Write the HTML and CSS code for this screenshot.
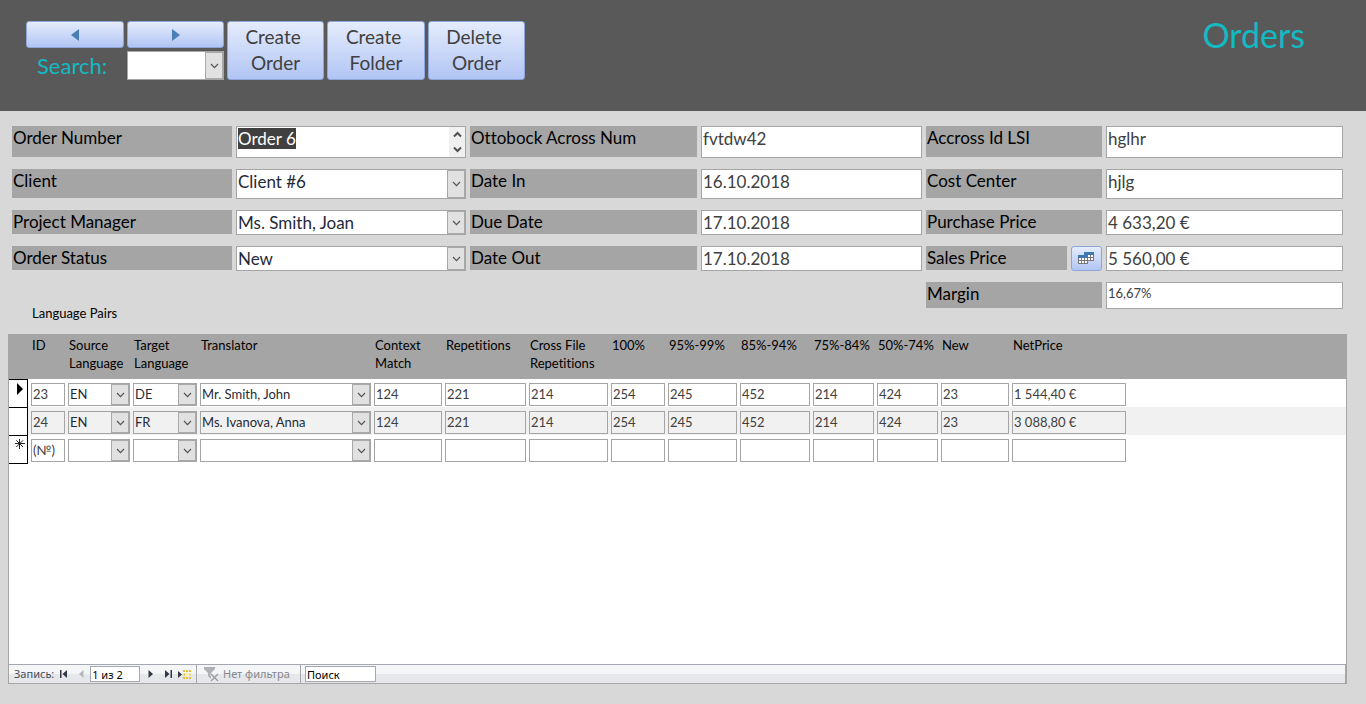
FILE: index.html
```html
<!DOCTYPE html>
<html lang="en">
<head>
<meta charset="utf-8">
<meta name="viewport" content="width=device-width, initial-scale=1">
<title>Orders</title>
<link rel="stylesheet" href="styles.css">
</head>
<body>
<svg class="defs" aria-hidden="true">
  <symbol id="chevron" viewBox="0 0 9 6"><path d="M1 1l3.500 3.600L8 1" fill="none" stroke="#555" stroke-width="1.200"/></symbol>
</svg>

<header class="topbar">
  <div class="toolbar">
    <button class="btn nav-prev" type="button" aria-label="Previous order"><svg width="8" height="12" viewBox="0 0 8 12"><path d="M8 0v12L0 6z" fill="#4a7fb5"/></svg></button>
    <button class="btn nav-next" type="button" aria-label="Next order"><svg width="8" height="12" viewBox="0 0 8 12"><path d="M0 0v12l8-6z" fill="#4a7fb5"/></svg></button>
    <label class="search-label" for="search">Search:</label>
    <div class="combo search-combo"><select id="search"><option></option></select><span class="arrow"><svg><use href="#chevron"/></svg></span></div>
    <button class="btn btn-big" type="button">Create 
Order</button>
    <button class="btn btn-big" type="button">Create 
Folder</button>
    <button class="btn btn-big" type="button">Delete 
Order</button>
  </div>
  <h1>Orders</h1>
</header>

<main>
<form class="form" onsubmit="return false">
  <label class="name" for="order-number">Order Number</label>
  <div class="spin-field tall"><input id="order-number" value="Order 6">
    <div class="spinner">
      <button type="button" aria-label="Scroll up"><svg width="9" height="7" viewBox="0 0 9 7"><path d="M1 5.500L4.500 2 8 5.500" fill="none" stroke="#505050" stroke-width="2"/></svg></button>
      <button type="button" aria-label="Scroll down"><svg width="9" height="7" viewBox="0 0 9 7"><path d="M1 1.500L4.500 5 8 1.500" fill="none" stroke="#505050" stroke-width="2"/></svg></button>
    </div>
  </div>
  <label class="name" for="across-num">Ottobock Across Num</label>
  <input class="field tall" id="across-num" value="fvtdw42">
  <label class="name" for="across-id">Accross Id LSI</label>
  <input class="field tall" id="across-id" value="hglhr">

  <label class="name" for="client">Client</label>
  <div class="combo medium"><select id="client"><option>Client #6</option></select><span class="arrow"><svg><use href="#chevron"/></svg></span></div>
  <label class="name" for="date-in">Date In</label>
  <input class="field medium" id="date-in" value="16.10.2018">
  <label class="name" for="cost-center">Cost Center</label>
  <input class="field medium" id="cost-center" value="hjlg">

  <label class="name" for="manager">Project Manager</label>
  <div class="combo"><select id="manager"><option>Ms. Smith, Joan</option></select><span class="arrow"><svg><use href="#chevron"/></svg></span></div>
  <label class="name" for="due-date">Due Date</label>
  <input class="field" id="due-date" value="17.10.2018">
  <label class="name" for="purchase">Purchase Price</label>
  <input class="field" id="purchase" value="4 633,20 €">

  <label class="name" for="status">Order Status</label>
  <div class="combo"><select id="status"><option>New</option></select><span class="arrow"><svg><use href="#chevron"/></svg></span></div>
  <label class="name" for="date-out">Date Out</label>
  <input class="field" id="date-out" value="17.10.2018">
  <div class="name-with-button">
    <label class="name" for="sales">Sales Price</label>
    <button class="btn" type="button" aria-label="Open price tables"><svg width="17" height="13" viewBox="0 0 17 13" shape-rendering="crispEdges"><path d="M6 0h10v9H6z" fill="#fff"/><path d="M6 0h10v3H6z" fill="#3e78b2"/><path d="M6.500 3v5.500h9V3M12.500 3v5.500M9.500 3v5.500M6.500 5.500h9" fill="none" stroke="#777"/><path d="M0 3h10v9H0z" fill="#fff"/><path d="M0 3h10v3H0z" fill="#3e78b2"/><path d="M.5 6v5.500h9V6M3.500 6v5.500M6.500 6v5.500M.5 8.500h9" fill="none" stroke="#777"/></svg></button>
  </div>
  <input class="field" id="sales" value="5 560,00 €">

  <h2>Language Pairs</h2>
  <label class="name margin-name" for="margin">Margin</label>
  <input class="field margin-field" id="margin" value="16,67%">
</form>

<section class="subform">
  <table>
    <colgroup>
      <col class="c-sel"><col class="c-id"><col class="c-src"><col class="c-tgt"><col class="c-tr"><col class="c-ctx"><col class="c-rep"><col class="c-cross"><col class="c-100"><col class="c-95"><col class="c-85"><col class="c-75"><col class="c-50"><col class="c-new"><col>
    </colgroup>
    <thead>
      <tr><td></td><th>ID</th><th>Source<br>Language</th><th>Target<br>Language</th><th>Translator</th><th>Context<br>Match</th><th>Repetitions</th><th>Cross File<br>Repetitions</th><th>100%</th><th>95%-99%</th><th>85%-94%</th><th>75%-84%</th><th>50%-74%</th><th>New</th><th>NetPrice</th></tr>
    </thead>
    <tbody>
      <tr>
        <td class="sel"><div class="mark"><svg width="6" height="12" viewBox="0 0 6 12"><path d="M0 0v12l6-6z"/></svg></div></td>
        <td><input aria-label="ID" value="23"></td>
        <td><div class="combo"><select aria-label="Source Language"><option>EN</option></select><span class="arrow"><svg><use href="#chevron"/></svg></span></div></td>
        <td><div class="combo"><select aria-label="Target Language"><option>DE</option></select><span class="arrow"><svg><use href="#chevron"/></svg></span></div></td>
        <td><div class="combo"><select aria-label="Translator"><option>Mr. Smith, John</option></select><span class="arrow"><svg><use href="#chevron"/></svg></span></div></td>
        <td><input aria-label="Context Match" value="124"></td>
        <td><input aria-label="Repetitions" value="221"></td>
        <td><input aria-label="Cross File Repetitions" value="214"></td>
        <td><input aria-label="100%" value="254"></td>
        <td><input aria-label="95%-99%" value="245"></td>
        <td><input aria-label="85%-94%" value="452"></td>
        <td><input aria-label="75%-84%" value="214"></td>
        <td><input aria-label="50%-74%" value="424"></td>
        <td><input aria-label="New" value="23"></td>
        <td><input class="price" aria-label="NetPrice" value="1 544,40 €"></td>
      </tr>
      <tr class="alt">
        <td class="sel"><div class="mark"></div></td>
        <td><input aria-label="ID" value="24"></td>
        <td><div class="combo"><select aria-label="Source Language"><option>EN</option></select><span class="arrow"><svg><use href="#chevron"/></svg></span></div></td>
        <td><div class="combo"><select aria-label="Target Language"><option>FR</option></select><span class="arrow"><svg><use href="#chevron"/></svg></span></div></td>
        <td><div class="combo"><select aria-label="Translator"><option>Ms. Ivanova, Anna</option></select><span class="arrow"><svg><use href="#chevron"/></svg></span></div></td>
        <td><input aria-label="Context Match" value="124"></td>
        <td><input aria-label="Repetitions" value="221"></td>
        <td><input aria-label="Cross File Repetitions" value="214"></td>
        <td><input aria-label="100%" value="254"></td>
        <td><input aria-label="95%-99%" value="245"></td>
        <td><input aria-label="85%-94%" value="452"></td>
        <td><input aria-label="75%-84%" value="214"></td>
        <td><input aria-label="50%-74%" value="424"></td>
        <td><input aria-label="New" value="23"></td>
        <td><input class="price" aria-label="NetPrice" value="3 088,80 €"></td>
      </tr>
      <tr class="last">
        <td class="sel"><div class="mark"><svg width="10" height="10" viewBox="0 0 10 10"><path d="M4.500 0v10M0 4.500h10M1.300 1.300l6.700 6.700M8 1.300L1.300 8" stroke="#222" fill="none"/></svg></div></td>
        <td><input aria-label="ID" value="(№)"></td>
        <td><div class="combo"><select aria-label="Source Language"><option></option></select><span class="arrow"><svg><use href="#chevron"/></svg></span></div></td>
        <td><div class="combo"><select aria-label="Target Language"><option></option></select><span class="arrow"><svg><use href="#chevron"/></svg></span></div></td>
        <td><div class="combo"><select aria-label="Translator"><option></option></select><span class="arrow"><svg><use href="#chevron"/></svg></span></div></td>
        <td><input aria-label="Context Match"></td>
        <td><input aria-label="Repetitions"></td>
        <td><input aria-label="Cross File Repetitions"></td>
        <td><input aria-label="100%"></td>
        <td><input aria-label="95%-99%"></td>
        <td><input aria-label="85%-94%"></td>
        <td><input aria-label="75%-84%"></td>
        <td><input aria-label="50%-74%"></td>
        <td><input aria-label="New"></td>
        <td><input class="price" aria-label="NetPrice"></td>
      </tr>
    </tbody>
  </table>

  <div class="recordbar" lang="ru">
    <div class="records">
      <label for="record">Запись:</label>
      <button type="button" aria-label="Первая запись"><svg width="7" height="8" viewBox="0 0 7 8"><path d="M0 0h1.500v8H0zM7 0v8L2.500 4z" fill="#333a45"/></svg></button>
      <button class="prev" type="button" aria-label="Предыдущая запись"><svg width="5" height="8" viewBox="0 0 5 8"><path d="M4.500 0v8L0 4z" fill="#b4b7bd"/></svg></button>
      <input id="record" value="1 из 2">
      <button type="button" aria-label="Следующая запись"><svg width="5" height="8" viewBox="0 0 5 8"><path d="M.5 0v8L5 4z" fill="#333a45"/></svg></button>
      <button class="to-last" type="button" aria-label="Последняя запись"><svg width="7" height="8" viewBox="0 0 7 8"><path d="M0 0v8l4.500-4zM5.500 0H7v8H5.500z" fill="#333a45"/></svg></button>
      <button type="button" aria-label="Новая запись"><svg width="13" height="9" viewBox="0 0 13 9"><path d="M0 1v7l4-3.500z" fill="#333a45"/><path d="M5 1h8M5 8h8M5.500 4.500h7" stroke="#e5c02e" stroke-width="2" stroke-dasharray="2 1"/><path d="M7 3h4v3H7z" fill="#fff3a6"/></svg></button>
    </div>
    <button class="filter" type="button" disabled><svg width="16" height="15" viewBox="0 0 16 15"><path d="M0 0h11v2L7 6v6L4 9V6L0 2z" fill="#aeb0b5"/><path d="M7 7l7 7M14 7l-7 7" stroke="#eceef1" stroke-width="3"/><path d="M7 7l7 7M14 7l-7 7" stroke="#9b9da3" stroke-width="1.500"/></svg>Нет фильтра</button>
    <input class="find" aria-label="Поиск" value="Поиск">
  </div>
</section>
</main>
<script src="app.js"></script>
</body>
</html>
```
FILE: styles.css
```css
* { box-sizing: border-box; }

body {
  margin: 0;
  min-height: 100vh;
  display: flex;
  flex-direction: column;
  background: #d8d8d8;
  color: #000;
  font: 17px/23px Lato, "Noto Sans", sans-serif;
  font-variant-ligatures: none;
}

.defs { position: absolute; width: 0; height: 0; }

input, select, button {
  font: inherit;
  margin: 0;
  min-width: 0;
  border-radius: 0;
}

button { padding: 0; }

/* Header */
.topbar {
  display: flex;
  justify-content: space-between;
  align-items: flex-start;
  height: 111px;
  padding: 19px 61px 0 26px;
  background: #595959;
}

.toolbar {
  display: grid;
  grid-template-columns: 98px 97px 97px 98px 97px;
  grid-template-rows: 27px 29px;
  gap: 3px;
  margin-top: 2px;
}

.btn {
  display: flex;
  align-items: center;
  justify-content: center;
  border: 1px solid #8ea6d9;
  border-radius: 3px;
  background: linear-gradient(#e5ecfc, #b1c5f4);
  color: #404040;
}

.nav-prev { grid-area: 1 / 1; }
.nav-next { grid-area: 1 / 2; }
.search-label { grid-area: 2 / 1; padding-left: 11px; color: #12bac4; font-size: 22px; line-height: 29px; }
.search-combo { grid-area: 2 / 2; }

.btn-big {
  grid-row: 1 / 3;
  padding-bottom: 2px;
  font-size: 19px;
  line-height: 26px;
  white-space: pre;
}

h1 {
  margin: 0;
  color: #12bac4;
  font-size: 34px;
  font-weight: 400;
  line-height: 32px;
}

/* Combo boxes */
.combo {
  display: grid;
  grid-template-columns: 1fr 19px;
  grid-template-rows: 100%;
}

.combo select {
  grid-area: 1 / 1 / 2 / 3;
  width: 100%;
  height: 100%;
  padding: 0 18px 0 1px;
  border: 1px solid #a5a5a5;
  background: #fff;
  color: #1f2a3a;
  appearance: none;
}

.arrow {
  grid-area: 1 / 2;
  z-index: 1;
  display: flex;
  align-items: center;
  justify-content: center;
  margin: 1px 1px 1px 0;
  border: 1px solid #a9a9a9;
  background: #e1e1e1;
  pointer-events: none;
}

.arrow svg { width: 9px; height: 6px; }

/* Order form */
main {
  flex: 1;
  display: flex;
  flex-direction: column;
  padding: 15px 19px 20px 8px;
}

.form {
  display: grid;
  grid-template-columns: 220fr 230fr 227fr 221fr 176fr 237fr;
  grid-template-rows: 32px 30px 25px 25px 40px;
  gap: 11px 4px;
  margin: 0 4px;
}

.name {
  margin-bottom: 1px;
  padding-left: 1px;
  background: #a5a5a5;
  white-space: nowrap;
}

.field, .spin-field input {
  width: 100%;
  height: 100%;
  padding: 0 1px;
  border: 1px solid #a5a5a5;
  background: #fff;
  color: #404040;
}

.field.tall, .tall input { padding-bottom: 7px; }
.field.medium, .medium select { padding-bottom: 5px; }

.spin-field {
  display: grid;
  grid-template-columns: 1fr 17px;
  grid-template-rows: 100%;
}

.spin-field input { grid-area: 1 / 1 / 2 / 3; outline: 0; }
.spin-field input::selection { background: #404040; color: #fff; }

.spinner {
  grid-area: 1 / 2;
  z-index: 1;
  display: grid;
  margin: 1px 1px 1px 0;
  background: #f0f0f0;
}

.spinner button {
  display: flex;
  align-items: center;
  justify-content: center;
  border: 0;
  background: none;
}

.name-with-button { display: grid; grid-template-columns: 1fr 31px; gap: 4px; }

h2 {
  grid-column: 1 / 5;
  align-self: end;
  margin: 0;
  padding-left: 20px;
  font-size: 13px;
  font-weight: 400;
  line-height: 18px;
}

.margin-name { height: 26px; }
.field.margin-field { height: 27px; padding-bottom: 6px; font-size: 13px; }

/* Language pairs */
.subform {
  flex: 1;
  display: flex;
  flex-direction: column;
  justify-content: space-between;
  margin-top: 12px;
  border: 1px solid #a5a5a5;
  background: #fff;
  font-size: 13px;
  line-height: 18px;
}

table {
  width: 100%;
  table-layout: fixed;
  border-collapse: separate;
  border-spacing: 0;
}

.c-sel { width: 22px; }
.c-id { width: 37px; }
.c-src { width: 65px; }
.c-tgt { width: 67px; }
.c-tr { width: 174px; }
.c-ctx { width: 71px; }
.c-rep { width: 84px; }
.c-cross { width: 82px; }
.c-100 { width: 57px; }
.c-95 { width: 72px; }
.c-85 { width: 73px; }
.c-75, .c-50 { width: 64px; }
.c-new { width: 71px; }

thead { background: #a5a5a5; }

th {
  height: 44px;
  padding: 1px 0 0 1px;
  font-weight: 400;
  text-align: left;
  vertical-align: top;
  white-space: nowrap;
}

tbody td { height: 28px; padding: 4px 3px 1px 0; vertical-align: top; }

td input, td .combo {
  display: grid;
  width: 100%;
  height: 23px;
}

td input {
  padding: 0 1px 2px;
  border: 1px solid #a5a5a5;
  background: #fff;
  color: #404040;
}

td .combo select { padding-bottom: 2px; }

td .price { max-width: 114px; }

.alt td, .alt input, .alt .combo select { background: #f1f1f1; }
.alt .sel { background: linear-gradient(90deg, #fff 19px, #f1f1f1 19px); }

tbody .sel { padding: 0 3px 0 0; }

.mark {
  display: flex;
  justify-content: center;
  height: 28px;
  padding: 3px 0 0 3px;
  border: solid #000;
  border-width: 1px 1px 0 0;
}

.last .mark { height: 29px; border-bottom-width: 1px; }

/* Record navigation */
.recordbar {
  display: flex;
  align-items: stretch;
  height: 19px;
  border-top: 1px solid #a6a8b1;
  border-right: 1px solid #a6a8b1;
  background: linear-gradient(#f3f5f7 50%, #e5e7eb 50%);
  color: #444c5c;
  font: 11px/18px "Noto Sans", "Open Sans", sans-serif;
}

.recordbar button { display: flex; align-items: center; border: 0; background: none; }

.recordbar input {
  height: 16px;
  margin-top: 1px;
  padding: 0 1px;
  border: 1px solid #a6a8b1;
  background: #fff;
  color: #000;
  line-height: 14px;
}

.records {
  display: flex;
  gap: 6px;
  width: 188px;
  padding-left: 5px;
  border-right: 1px solid #a6a8b1;
}

.records input { width: 50px; }
.records .prev { padding-left: 6px; }
.records .to-last { padding-left: 6px; }
.records input + button { padding-left: 2px; }

.recordbar .filter {
  gap: 3px;
  width: 104px;
  padding-left: 7px;
  border-right: 1px solid #a6a8b1;
  color: #85878c;
}

.recordbar .find { width: 71px; margin-left: 4px; }
```
FILE: app.js
```js
const orderNumber = document.getElementById("order-number");
orderNumber.focus();
orderNumber.select();
```
